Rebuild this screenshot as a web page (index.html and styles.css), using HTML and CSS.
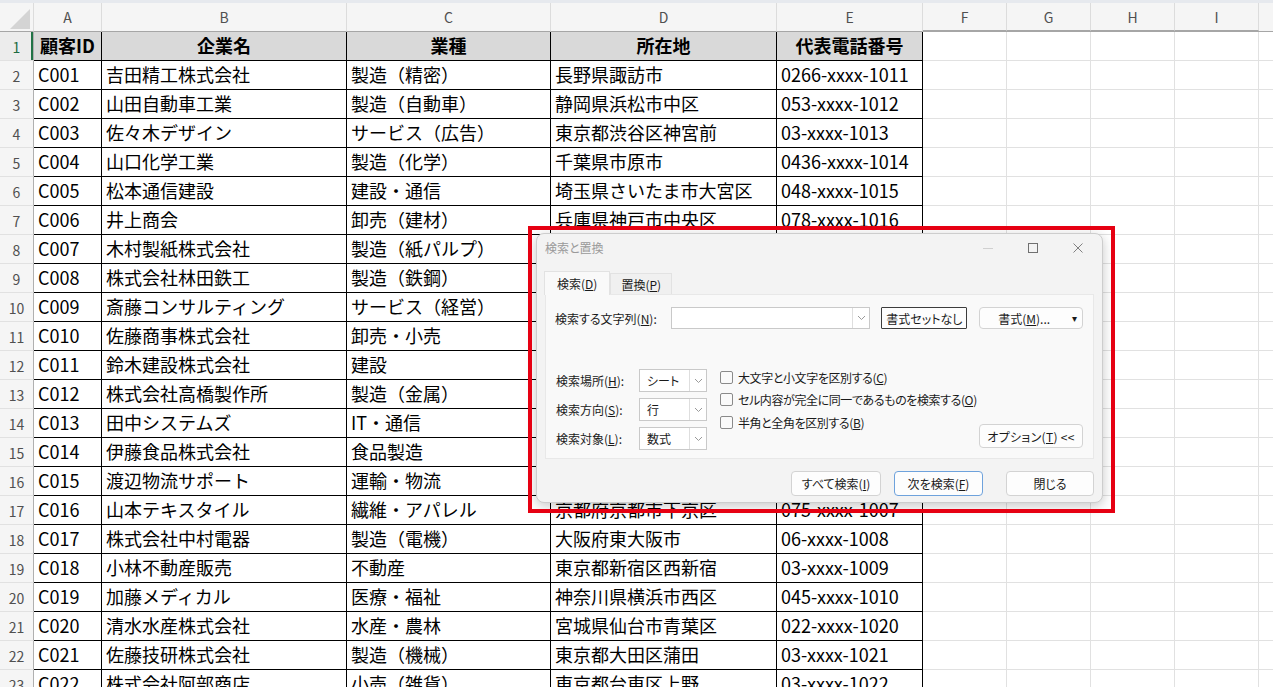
FILE: index.html
```html
<!DOCTYPE html>
<html lang="ja">
<head>
  <meta charset="UTF-8">
  <title>顧客一覧 - 検索と置換</title>
<link rel="stylesheet" href="styles.css">
</head>
<body>
  <div class="topbar"></div>

  <div class="sheet">
    <div class="row head">
      <div class="corner">
        <svg width="34" height="29" viewBox="0 0 34 29"><polygon points="30,6 30,26 10,26" fill="#d4d4d4"/></svg>
      </div>
      <div class="col">A</div>
      <div class="col">B</div>
      <div class="col">C</div>
      <div class="col">D</div>
      <div class="col">E</div>
      <div class="cols-rest">
        <div class="col">F</div>
        <div class="col">G</div>
        <div class="col">H</div>
        <div class="col">I</div>
      </div>
    </div>

    <div class="row title">
      <div class="num active">1</div>
      <div class="cell">顧客ID</div>
      <div class="cell">企業名</div>
      <div class="cell">業種</div>
      <div class="cell">所在地</div>
      <div class="cell">代表電話番号</div>
      <div class="rest"></div>
    </div>
    <div class="row">
      <div class="num">2</div><div class="cell">C001</div><div class="cell">吉田精工株式会社</div><div class="cell">製造（精密）</div><div class="cell">長野県諏訪市</div><div class="cell">0266-xxxx-1011</div><div class="rest"></div>
    </div>
    <div class="row">
      <div class="num">3</div><div class="cell">C002</div><div class="cell">山田自動車工業</div><div class="cell">製造（自動車）</div><div class="cell">静岡県浜松市中区</div><div class="cell">053-xxxx-1012</div><div class="rest"></div>
    </div>
    <div class="row">
      <div class="num">4</div><div class="cell">C003</div><div class="cell">佐々木デザイン</div><div class="cell">サービス（広告）</div><div class="cell">東京都渋谷区神宮前</div><div class="cell">03-xxxx-1013</div><div class="rest"></div>
    </div>
    <div class="row">
      <div class="num">5</div><div class="cell">C004</div><div class="cell">山口化学工業</div><div class="cell">製造（化学）</div><div class="cell">千葉県市原市</div><div class="cell">0436-xxxx-1014</div><div class="rest"></div>
    </div>
    <div class="row">
      <div class="num">6</div><div class="cell">C005</div><div class="cell">松本通信建設</div><div class="cell">建設・通信</div><div class="cell">埼玉県さいたま市大宮区</div><div class="cell">048-xxxx-1015</div><div class="rest"></div>
    </div>
    <div class="row">
      <div class="num">7</div><div class="cell">C006</div><div class="cell">井上商会</div><div class="cell">卸売（建材）</div><div class="cell">兵庫県神戸市中央区</div><div class="cell">078-xxxx-1016</div><div class="rest"></div>
    </div>
    <div class="row">
      <div class="num">8</div><div class="cell">C007</div><div class="cell">木村製紙株式会社</div><div class="cell">製造（紙パルプ）</div><div class="cell">静岡県富士市</div><div class="cell">0545-xxxx-1017</div><div class="rest"></div>
    </div>
    <div class="row">
      <div class="num">9</div><div class="cell">C008</div><div class="cell">株式会社林田鉄工</div><div class="cell">製造（鉄鋼）</div><div class="cell">福岡県北九州市</div><div class="cell">093-xxxx-1018</div><div class="rest"></div>
    </div>
    <div class="row">
      <div class="num">10</div><div class="cell">C009</div><div class="cell">斎藤コンサルティング</div><div class="cell">サービス（経営）</div><div class="cell">東京都千代田区丸の内</div><div class="cell">03-xxxx-1019</div><div class="rest"></div>
    </div>
    <div class="row">
      <div class="num">11</div><div class="cell">C010</div><div class="cell">佐藤商事株式会社</div><div class="cell">卸売・小売</div><div class="cell">東京都港区芝</div><div class="cell">03-xxxx-1001</div><div class="rest"></div>
    </div>
    <div class="row">
      <div class="num">12</div><div class="cell">C011</div><div class="cell">鈴木建設株式会社</div><div class="cell">建設</div><div class="cell">神奈川県川崎市</div><div class="cell">044-xxxx-1002</div><div class="rest"></div>
    </div>
    <div class="row">
      <div class="num">13</div><div class="cell">C012</div><div class="cell">株式会社高橋製作所</div><div class="cell">製造（金属）</div><div class="cell">愛知県名古屋市</div><div class="cell">052-xxxx-1003</div><div class="rest"></div>
    </div>
    <div class="row">
      <div class="num">14</div><div class="cell">C013</div><div class="cell">田中システムズ</div><div class="cell">IT・通信</div><div class="cell">東京都品川区大崎</div><div class="cell">03-xxxx-1004</div><div class="rest"></div>
    </div>
    <div class="row">
      <div class="num">15</div><div class="cell">C014</div><div class="cell">伊藤食品株式会社</div><div class="cell">食品製造</div><div class="cell">北海道札幌市</div><div class="cell">011-xxxx-1005</div><div class="rest"></div>
    </div>
    <div class="row">
      <div class="num">16</div><div class="cell">C015</div><div class="cell">渡辺物流サポート</div><div class="cell">運輸・物流</div><div class="cell">埼玉県川口市</div><div class="cell">048-xxxx-1006</div><div class="rest"></div>
    </div>
    <div class="row">
      <div class="num">17</div><div class="cell">C016</div><div class="cell">山本テキスタイル</div><div class="cell">繊維・アパレル</div><div class="cell">京都府京都市下京区</div><div class="cell">075-xxxx-1007</div><div class="rest"></div>
    </div>
    <div class="row">
      <div class="num">18</div><div class="cell">C017</div><div class="cell">株式会社中村電器</div><div class="cell">製造（電機）</div><div class="cell">大阪府東大阪市</div><div class="cell">06-xxxx-1008</div><div class="rest"></div>
    </div>
    <div class="row">
      <div class="num">19</div><div class="cell">C018</div><div class="cell">小林不動産販売</div><div class="cell">不動産</div><div class="cell">東京都新宿区西新宿</div><div class="cell">03-xxxx-1009</div><div class="rest"></div>
    </div>
    <div class="row">
      <div class="num">20</div><div class="cell">C019</div><div class="cell">加藤メディカル</div><div class="cell">医療・福祉</div><div class="cell">神奈川県横浜市西区</div><div class="cell">045-xxxx-1010</div><div class="rest"></div>
    </div>
    <div class="row">
      <div class="num">21</div><div class="cell">C020</div><div class="cell">清水水産株式会社</div><div class="cell">水産・農林</div><div class="cell">宮城県仙台市青葉区</div><div class="cell">022-xxxx-1020</div><div class="rest"></div>
    </div>
    <div class="row">
      <div class="num">22</div><div class="cell">C021</div><div class="cell">佐藤技研株式会社</div><div class="cell">製造（機械）</div><div class="cell">東京都大田区蒲田</div><div class="cell">03-xxxx-1021</div><div class="rest"></div>
    </div>
    <div class="row">
      <div class="num">23</div><div class="cell">C022</div><div class="cell">株式会社阿部商店</div><div class="cell">小売（雑貨）</div><div class="cell">東京都台東区上野</div><div class="cell">03-xxxx-1022</div><div class="rest"></div>
    </div>
  </div>

  <!-- 検索と置換ダイアログ -->
  <div class="dialog">
    <div class="titlebar">
      <span class="dlg-title">検索と置換</span>
      <div class="winbtns">
        <svg width="12" height="12" viewBox="0 0 12 12"><line x1="1" y1="6.5" x2="11" y2="6.5" stroke="#d0d0d0" stroke-width="1"/></svg>
        <svg width="12" height="12" viewBox="0 0 12 12"><rect x="1.5" y="1.5" width="9" height="9" fill="none" stroke="#707070" stroke-width="1"/></svg>
        <svg width="12" height="12" viewBox="0 0 12 12"><path d="M1.5 1.5 L10.5 10.5 M10.5 1.5 L1.5 10.5" stroke="#808080" stroke-width="1"/></svg>
      </div>
    </div>

    <div class="tabs">
      <div class="tab on">検索(<u>D</u>)</div>
      <div class="tab">置換(<u>P</u>)</div>
    </div>

    <div class="panel">
      <div class="find-row">
        <label class="find-label">検索する文字列(<u>N</u>):</label>
        <div class="combo wide">
          <span class="combo-text"></span>
          <span class="combo-arrow"><svg width="9" height="6" viewBox="0 0 9 6"><polyline points="1,1 4.5,4.5 8,1" fill="none" stroke="#9a9a9a" stroke-width="1"/></svg></span>
        </div>
        <button class="btn default">書式セットなし</button>
        <button class="btn fmt">書式(<u>M</u>)...<span class="caret">▾</span></button>
      </div>

      <div class="opts">
        <div class="fields">
          <label>検索場所(<u>H</u>):</label>
          <div class="combo"><span class="combo-text">シート</span><span class="combo-arrow"><svg width="9" height="6" viewBox="0 0 9 6"><polyline points="1,1 4.5,4.5 8,1" fill="none" stroke="#9a9a9a" stroke-width="1"/></svg></span></div>
          <label>検索方向(<u>S</u>):</label>
          <div class="combo"><span class="combo-text">行</span><span class="combo-arrow"><svg width="9" height="6" viewBox="0 0 9 6"><polyline points="1,1 4.5,4.5 8,1" fill="none" stroke="#9a9a9a" stroke-width="1"/></svg></span></div>
          <label>検索対象(<u>L</u>):</label>
          <div class="combo"><span class="combo-text">数式</span><span class="combo-arrow"><svg width="9" height="6" viewBox="0 0 9 6"><polyline points="1,1 4.5,4.5 8,1" fill="none" stroke="#9a9a9a" stroke-width="1"/></svg></span></div>
        </div>
        <div class="checks">
          <div class="check"><span class="box"></span>大文字と小文字を区別する(<u>C</u>)</div>
          <div class="check"><span class="box"></span>セル内容が完全に同一であるものを検索する(<u>O</u>)</div>
          <div class="check"><span class="box"></span>半角と全角を区別する(<u>B</u>)</div>
        </div>
        <button class="btn optbtn">オプション(<u>T</u>) &lt;&lt;</button>
      </div>
    </div>

    <div class="actions">
      <button class="btn act">すべて検索(<u>I</u>)</button>
      <button class="btn act focus">次を検索(<u>F</u>)</button>
      <button class="btn act close">閉じる</button>
    </div>
  </div>

  <div class="highlight"></div>
</body>
</html>
```

FILE: styles.css
```css
body { margin: 0; background: #fff; font-family: "Noto Sans CJK JP", "Noto Sans", sans-serif; overflow: hidden; width: 1273px; height: 687px; position: relative; }
.topbar { height: 3px; background: #e6e9ee; }

/* sheet grid */
.row { display: grid; grid-template-columns: 34px 68px 245px 204px 226px 146px 1fr; height: 29px; }
.row > div { box-sizing: border-box; height: 29px; }
.head { background: #f5f5f5; }
.head .corner, .head .col { border-right: 1px solid #dcdcdc; border-bottom: 1px solid #a6a6a6; }
.head .corner svg { display: block; }
.col { font-size: 14px; color: #505050; text-align: center; line-height: 28px; box-sizing: border-box; }
.cols-rest { display: flex; border-bottom: 1px solid #a6a6a6; }
.cols-rest .col { width: 84px; flex: none; }

.num { background: #f5f5f5; border-right: 1px solid #b0b0b0; border-bottom: 1px solid #e1e1e1; font-size: 14px; color: #505050; text-align: center; line-height: 30px; }
.num.active { color: #1d6b40; box-shadow: inset -2px 0 0 #217346; background: #ececec; }
.cell { border-right: 1px solid #000; border-bottom: 1px solid #000; font-size: 18px; line-height: 27px; padding-left: 4px; white-space: nowrap; overflow: hidden; color: #000; }
.title .cell { background: #d9d9d9; font-weight: bold; text-align: center; padding-left: 0; }
.rest { border-bottom: 1px solid #e1e1e1; background: repeating-linear-gradient(to right, transparent 0 83px, #e1e1e1 83px 84px); }

/* dialog */
.dialog { position: absolute; left: 536px; top: 233px; width: 567px; height: 270px; box-sizing: border-box; background: #f3f3f3; border: 1px solid #cdcdcd; border-radius: 8px; box-shadow: 0 3px 12px rgba(0,0,0,0.22); font-size: 12px; color: #1a1a1a; display: flex; flex-direction: column; font-feature-settings: "palt"; white-space: nowrap; }
.titlebar { height: 37px; display: flex; align-items: center; justify-content: space-between; padding: 0 18px 0 8px; }
.dlg-title { color: #9a9a9a; font-size: 12px; margin-top: -10px; }
.winbtns { display: flex; gap: 33px; margin-top: -10px; }
.winbtns svg { display: block; }

.tabs { display: flex; padding-left: 7px; height: 23px; align-items: flex-end; }
.tab { height: 21px; line-height: 21px; padding: 0 10px; border: 1px solid #e2e2e2; border-bottom: none; background: #f0f0f0; box-sizing: border-box; }
.tab.on { height: 24px; line-height: 24px; background: #f9f9f9; padding: 0 12px; margin-bottom: -1px; position: relative; }
.panel { margin: 0 8px; background: #f9f9f9; border: 1px solid #e8e8e8; height: 165px; box-sizing: border-box; padding: 12px 10px 8px 9px; }

.find-row { display: flex; align-items: center; height: 22px; }
.find-label { width: 116px; flex: none; }
.combo { display: flex; height: 23px; box-sizing: border-box; border: 1px solid #c9c9c9; background: #fff; }
.combo.wide { width: 200px; height: 22px; margin-right: 11px; }
.combo-text { flex: 1; padding-left: 7px; line-height: 21px; }
.combo-arrow { width: 16px; border-left: 1px solid #dedede; display: flex; align-items: center; justify-content: center; }
.combo-arrow svg { display: block; }

.btn { font-family: inherit; font-size: 12px; font-feature-settings: "palt"; white-space: nowrap; color: #1a1a1a; background: #fdfdfd; border: 1px solid #d3d3d3; border-radius: 4px; padding: 0; box-sizing: border-box; cursor: default; }
.btn.default { width: 86px; height: 22px; border: 1px solid #3c3c3c; border-radius: 1px; margin-right: 12px; }
.btn.fmt { width: 104px; height: 22px; position: relative; padding-right: 14px; }
.caret { position: absolute; right: 5px; top: 2px; font-size: 10px; }

.opts { display: flex; align-items: flex-end; margin-top: 40px; }
.fields { display: grid; grid-template-columns: 83px 68px; row-gap: 6px; align-items: center; padding-left: 1px; }
.fields .combo { width: 68px; }
.checks { align-self: flex-start; margin-left: 13px; margin-top: -3px; }
.check { height: 22.5px; display: flex; align-items: center; letter-spacing: -0.4px; }
.box { width: 11px; height: 11px; border: 1px solid #8a8a8a; border-radius: 2px; background: #fafafa; margin-right: 5px; }
.optbtn { width: 104px; height: 24px; margin-left: auto; margin-bottom: 2px; letter-spacing: 0.3px; }

.actions { display: flex; justify-content: flex-end; padding: 12px 8px 0 0; }
.act { height: 25px; width: 90px; }
.act.focus { width: 89px; margin-left: 13px; border-color: #6ea2dc; }
.act.close { width: 88px; margin-left: 23px; }

/* 注目枠 */
.highlight { position: absolute; left: 528px; top: 226px; width: 587px; height: 287px; box-sizing: border-box; border: 4px solid #e60012; pointer-events: none; }
```
